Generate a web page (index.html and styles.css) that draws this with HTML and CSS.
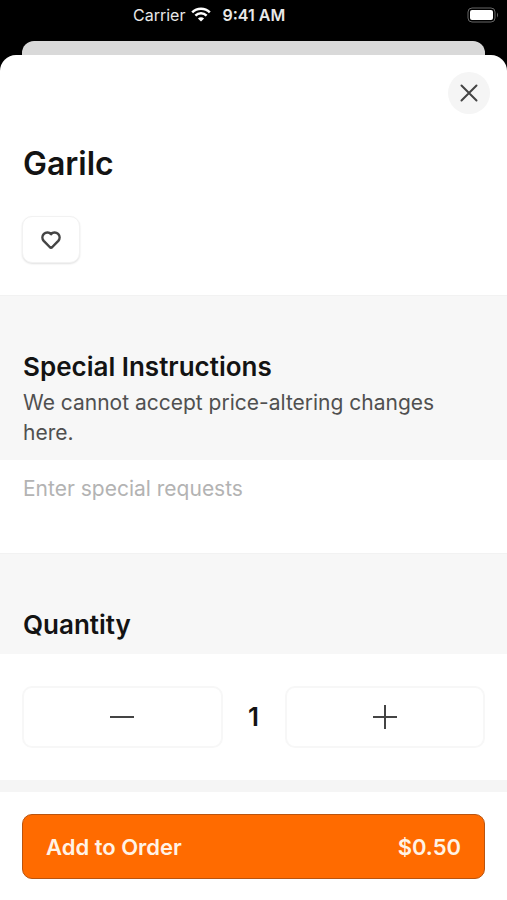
FILE: index.html
```html
<!DOCTYPE html>
<html lang="en">
<head>
<meta charset="utf-8">
<meta name="viewport" content="width=device-width, initial-scale=1">
<title>Garilc</title>
<link rel="stylesheet" href="styles.css">
</head>
<body>
<header class="status">
  <span class="carrier">Carrier</span>
  <svg class="wifi" viewBox="0 0 20 15" aria-hidden="true">
    <path d="M1.2 5.4a12.6 12.6 0 0 1 17.6 0" />
    <path d="M4.4 8.6a8 8 0 0 1 11.2 0" />
    <path class="wifi-dot" d="M10 14.6 6.9 11.5a4.4 4.4 0 0 1 6.2 0z" />
  </svg>
  <time class="clock">9:41 AM</time>
  <svg class="battery" viewBox="0 0 32 16" aria-hidden="true">
    <rect class="battery-case" x="1" y="1" width="27" height="14" rx="4" />
    <rect class="battery-level" x="3" y="3" width="23" height="10" rx="2" />
    <path class="battery-tip" d="M30 5.500q2 2.500 0 5z" />
  </svg>
</header>
<div class="backdrop"></div>
<main class="sheet">
  <section class="item">
    <button class="close" type="button" aria-label="Close">
      <svg viewBox="0 0 18 18" aria-hidden="true"><path d="M1.500 1.500l15 15M16.500 1.500l-15 15" /></svg>
    </button>
    <h1>Garilc</h1>
    <button class="favorite" type="button" aria-label="Favorite">
      <svg viewBox="0 0 20 18" aria-hidden="true"><path d="M10 3.100C8.200 1 4.900.9 2.900 2.900 1 4.900 1 7.900 2.700 9.800L8.700 16Q10 17.200 11.300 16L17.300 9.800C19 7.900 19 4.900 17.100 2.900 15.100.9 11.800 1 10 3.100Z" /></svg>
    </button>
  </section>
  <div class="band">
    <h2><label for="requests">Special Instructions</label></h2>
    <p>We cannot accept price-altering changes here.</p>
  </div>
  <textarea id="requests" class="requests" placeholder="Enter special requests"></textarea>
  <div class="band">
    <h2>Quantity</h2>
  </div>
  <div class="stepper">
    <button class="step" type="button" aria-label="Decrease quantity">
      <svg viewBox="0 0 24 24" aria-hidden="true"><path d="M0 12h24" /></svg>
    </button>
    <output class="count">1</output>
    <button class="step" type="button" aria-label="Increase quantity">
      <svg viewBox="0 0 24 24" aria-hidden="true"><path d="M0 12h24M12 0v24" /></svg>
    </button>
  </div>
  <footer class="checkout">
    <button class="add" type="button"><span>Add to Order</span><span>$0.50</span></button>
  </footer>
</main>
</body>
</html>
```
FILE: styles.css
```css
* {
  box-sizing: border-box;
}

body {
  margin: 0;
  min-height: 100vh;
  display: flex;
  flex-direction: column;
  background: #000;
  color: #131313;
  font-family: Inter, "Liberation Sans", sans-serif;
}

button {
  padding: 0;
  font: inherit;
  cursor: pointer;
}

svg {
  display: block;
  fill: none;
}

h1,
h2,
p {
  margin: 0;
}

.status {
  display: flex;
  align-items: center;
  height: 41px;
  padding: 0 8px 12px 133px;
  color: #e8e8e8;
  font-size: 16px;
  line-height: 20px;
}

.wifi {
  width: 20px;
  height: 15px;
  margin: 0 11px 0 6px;
  stroke: #fff;
  stroke-width: 2.5;
}

.wifi-dot {
  fill: #fff;
  stroke: none;
}

.clock {
  font-weight: 600;
}

.battery {
  width: 32px;
  height: 16px;
  margin-left: auto;
}

.battery-case {
  stroke: #666;
  stroke-width: 1;
}

.battery-level {
  fill: #fff;
}

.battery-tip {
  fill: #666;
}

.backdrop {
  height: 14px;
  margin: 0 22px;
  border-radius: 12px 12px 0 0;
  background: #d9d9d9;
}

.sheet {
  flex: 1;
  display: flex;
  flex-direction: column;
  border-radius: 16px 16px 0 0;
  background: #fff;
}

.item {
  display: flex;
  flex-direction: column;
  align-items: flex-start;
  padding: 17px 17px 32px 23px;
}

.close {
  display: grid;
  place-items: center;
  align-self: flex-end;
  width: 42px;
  height: 42px;
  border: 0;
  border-radius: 50%;
  background: #f5f5f5;
}

.close svg {
  width: 18px;
  height: 18px;
  stroke: #444;
  stroke-width: 2;
  stroke-linecap: round;
}

h1 {
  margin: 30px 0 32px;
  font-size: 32px;
  font-weight: 600;
  line-height: 40px;
}

.favorite {
  display: grid;
  place-items: center;
  width: 58px;
  height: 47px;
  margin-left: -1px;
  border: 1px solid #f2f2f2;
  border-radius: 10px;
  background: #fff;
  box-shadow: 0 1px 2px rgba(0, 0, 0, 0.12);
}

.favorite svg {
  width: 20px;
  height: 18px;
  stroke: #444;
  stroke-width: 2.5;
  stroke-linejoin: round;
}

.band {
  padding: 54px 23px 12px;
  border-top: 1px solid #f2f2f2;
  background: #f7f7f7;
}

h2 {
  font-size: 26px;
  font-weight: 600;
  line-height: 34px;
  font-optical-sizing: none;
}

.band p {
  padding-top: 4px;
  color: #505050;
  font-size: 21px;
  line-height: 30px;
}

.requests {
  display: block;
  width: 100%;
  height: 93px;
  padding: 14px 23px;
  border: 0;
  outline: 0;
  resize: none;
  background: #fff;
  color: #131313;
  font: 21px/30px Inter, "Liberation Sans", sans-serif;
}

.requests::placeholder {
  color: #b3b3b3;
  opacity: 1;
}

.stepper {
  display: grid;
  grid-template-columns: 1fr 62px 1fr;
  align-items: center;
  padding: 32px 22px;
}

.step {
  display: grid;
  place-items: center;
  height: 62px;
  border: 2px solid #f7f7f7;
  border-radius: 10px;
  background: #fff;
}

.step svg {
  width: 24px;
  height: 24px;
  stroke: #444;
  stroke-width: 2;
}

.count {
  color: #131313;
  font-size: 26px;
  font-weight: 600;
  line-height: 32px;
  text-align: center;
}

.checkout {
  flex: 1;
  padding: 22px 22px 20px;
  border-top: 12px solid #f5f5f5;
}

.add {
  display: flex;
  align-items: center;
  justify-content: space-between;
  width: 100%;
  height: 65px;
  padding: 0 23px;
  border: 1px solid #b9540f;
  border-radius: 10px;
  background: #ff6b00;
  color: #fff3e6;
  font-size: 22px;
  font-weight: 600;
}
```
